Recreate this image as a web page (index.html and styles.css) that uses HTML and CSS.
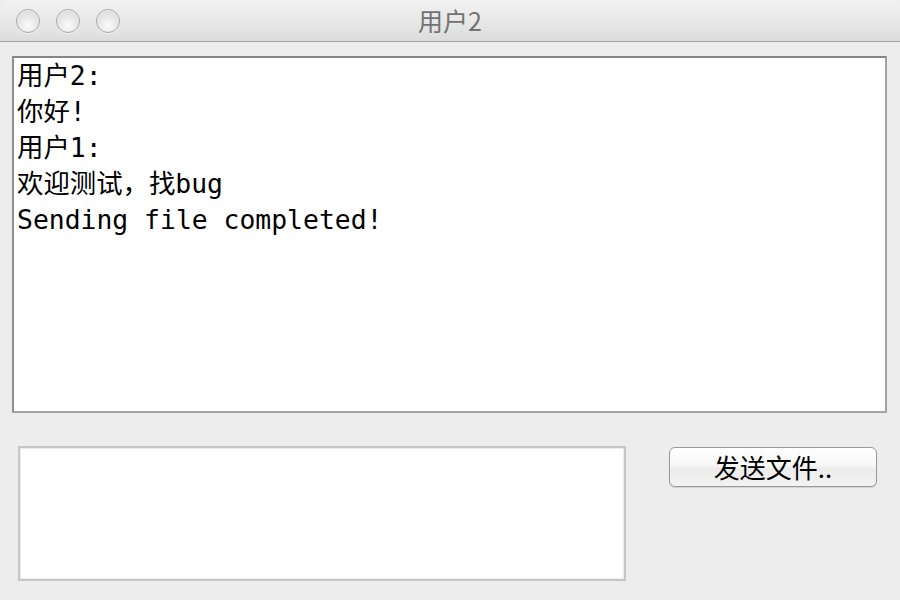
FILE: index.html
```html
<!DOCTYPE html>
<html lang="zh">
<head>
<meta charset="utf-8">
<title>用户2</title>
<link rel="stylesheet" href="styles.css">
</head>
<body>
<div class="window">
  <div class="titlebar">
    <div class="lights">
      <span class="light"></span>
      <span class="light"></span>
      <span class="light"></span>
    </div>
    <div class="title">用户2</div>
    <div class="spacer"></div>
  </div>
  <div class="content">
    <div class="log">
      <div class="line">用户2:</div>
      <div class="line">你好!</div>
      <div class="line">用户1:</div>
      <div class="line">欢迎测试，找bug</div>
      <div class="line">Sending file completed!</div>
    </div>
    <div class="bottom">
      <div class="input"></div>
      <button class="send">发送文件..</button>
    </div>
  </div>
</div>
</body>
</html>
```

FILE: styles.css
```css
html, body {
  margin: 0;
  padding: 0;
  background: #ededed;
}

.window {
  width: 900px;
  height: 600px;
  display: flex;
  flex-direction: column;
  background: #ededed;
  overflow: hidden;
}

.titlebar {
  height: 41px;
  border-bottom: 1px solid #a6a6a6;
  border-radius: 6px 6px 0 0;
  background: linear-gradient(to bottom, #f2f2f2 0%, #e6e6e6 60%, #dcdcdc 100%);
  display: grid;
  grid-template-columns: 1fr auto 1fr;
  align-items: center;
}

.lights {
  display: flex;
  gap: 16px;
  padding-left: 16px;
}

.light {
  width: 22px;
  height: 22px;
  border-radius: 50%;
  border: 1px solid #a8a8a8;
  background: radial-gradient(circle at 50% 70%, #fbfbfb 0%, #e9e9e9 45%, #d2d2d2 100%);
  box-shadow: inset 0 1px 1px rgba(255,255,255,0.9), 0 1px 0 rgba(255,255,255,0.6);
}

.title {
  font-family: "Noto Sans CJK SC", "Noto Sans", sans-serif;
  font-size: 25px;
  color: #727272;
  line-height: 41px;
}

.content {
  flex: 1;
  padding: 14px 13px 0 12px;
  display: flex;
  flex-direction: column;
}

.log {
  height: 353px;
  background: #fff;
  border: 2px solid #a3a3a3;
  border-top-color: #858585;
  border-left-color: #8e8e8e;
  padding: 0 3px;
  font-family: "DejaVu Sans Mono", "Noto Sans CJK SC", monospace;
  font-size: 26.4px;
  color: #000;
}

.line {
  height: 36px;
  line-height: 36px;
  white-space: pre;
}

.bottom {
  display: flex;
  align-items: flex-start;
  margin-top: 33px;
  padding-left: 6px;
  gap: 43px;
}

.input {
  width: 604px;
  height: 131px;
  background: #fff;
  border: 2px solid #c6c6c6;
  box-shadow: inset 0 0 0 1px #ececec;
}

.send {
  margin-top: 1px;
  width: 208px;
  height: 40px;
  border: 1px solid #9a9a9a;
  border-radius: 6px;
  background: linear-gradient(to bottom, #ffffff 0%, #f7f7f7 45%, #ececec 55%, #f3f3f3 100%);
  box-shadow: 0 1px 1px rgba(0,0,0,0.12);
  font-family: "Noto Sans CJK SC", "Noto Sans", sans-serif;
  font-size: 26px;
  line-height: 36px;
  color: #000;
  padding: 0;
}
```
